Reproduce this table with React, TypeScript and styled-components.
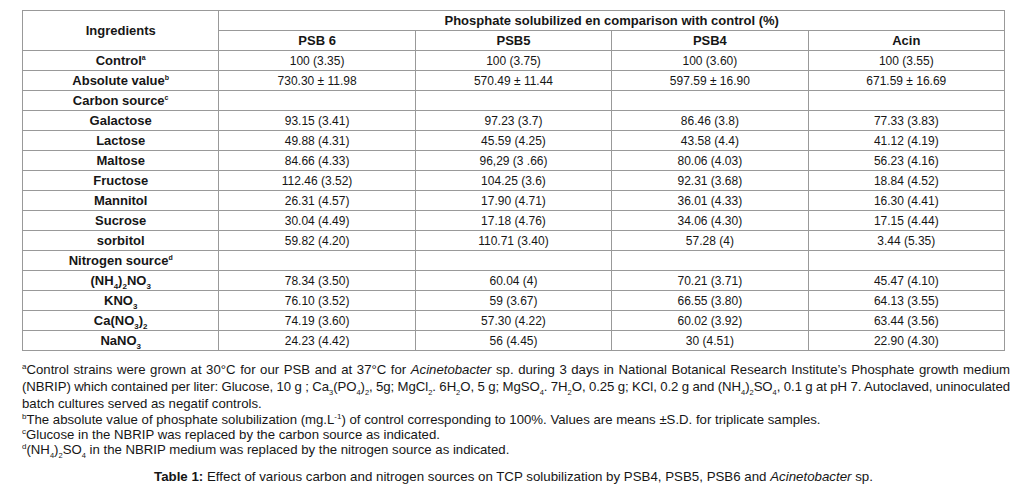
import React from "react";
import styled, { createGlobalStyle } from "styled-components";

const Global = createGlobalStyle`
  html, body { margin: 0; padding: 0; background: #fff; }
  body { font-family: "Liberation Sans", Arial, sans-serif; color: #161616; }
`;

const Page = styled.div`
  padding: 10px 12px 0 22px;
  width: 1022px;
  box-sizing: border-box;
`;

const Table = styled.table`
  width: 983px;
  border-collapse: collapse;
  table-layout: fixed;
  font-size: 12px;
`;

const Cell = styled.td<{ $bold?: boolean }>`
  border: 1px solid #999;
  height: 19px;
  padding: 0 4px;
  text-align: center;
  vertical-align: middle;
  line-height: 14px;
  font-size: ${(p) => (p.$bold ? "13px" : "12px")};
  font-weight: ${(p) => (p.$bold ? 700 : 400)};
`;

const Head = styled.th`
  border: 1px solid #999;
  height: 19px;
  padding: 0 4px;
  text-align: center;
  vertical-align: middle;
  line-height: 14px;
  font-size: 13px;
  font-weight: 700;
`;

const Sup = styled.sup`
  font-size: 7px;
  vertical-align: 5px;
  line-height: 0;
  font-weight: 700;
`;

const Sub = styled.sub`
  font-size: 8px;
  vertical-align: -4px;
  line-height: 0;
`;

const NSub = styled.sub`
  font-size: 7.5px;
  vertical-align: -4px;
  line-height: 0;
`;

const Notes = styled.div`
  margin-top: 10px;
  font-size: 13.2px;
  width: 988px;
`;

const NoteLine = styled.div<{ $lh?: number; $full?: boolean; $tight?: boolean }>`
  line-height: ${(p) => p.$lh ?? 15}px;
  text-align: ${(p) => (p.$full ? "justify" : "left")};
  text-align-last: ${(p) => (p.$full ? "justify" : "left")};
  white-space: ${(p) => (p.$full ? "nowrap" : "normal")};
  word-spacing: ${(p) => (p.$tight ? "-1.2px" : "normal")};
  letter-spacing: ${(p) => (p.$tight ? "-0.05px" : "normal")};
`;

const NoteSup = styled.sup`
  font-size: 8px;
  vertical-align: 5px;
  line-height: 0;
`;

const Caption = styled.div`
  margin-top: 12px;
  font-size: 13.3px;
  line-height: 16px;
  text-align: center;
  width: 983px;
`;

const B = styled.b`
  font-weight: 700;
`;

type Row = { label: React.ReactNode; values?: string[] };

const rows: Row[] = [
  { label: <>Control<Sup>a</Sup></>, values: ["100 (3.35)", "100 (3.75)", "100 (3.60)", "100 (3.55)"] },
  { label: <>Absolute value<Sup>b</Sup></>, values: ["730.30 ± 11.98", "570.49 ± 11.44", "597.59 ± 16.90", "671.59 ± 16.69"] },
  { label: <>Carbon source<Sup>c</Sup></> },
  { label: "Galactose", values: ["93.15 (3.41)", "97.23 (3.7)", "86.46 (3.8)", "77.33 (3.83)"] },
  { label: "Lactose", values: ["49.88 (4.31)", "45.59 (4.25)", "43.58 (4.4)", "41.12 (4.19)"] },
  { label: "Maltose", values: ["84.66 (4.33)", "96,29 (3 .66)", "80.06 (4.03)", "56.23 (4.16)"] },
  { label: "Fructose", values: ["112.46 (3.52)", "104.25 (3.6)", "92.31 (3.68)", "18.84 (4.52)"] },
  { label: "Mannitol", values: ["26.31 (4.57)", "17.90 (4.71)", "36.01 (4.33)", "16.30 (4.41)"] },
  { label: "Sucrose", values: ["30.04 (4.49)", "17.18 (4.76)", "34.06 (4.30)", "17.15 (4.44)"] },
  { label: "sorbitol", values: ["59.82 (4.20)", "110.71 (3.40)", "57.28 (4)", "3.44 (5.35)"] },
  { label: <>Nitrogen source<Sup>d</Sup></> },
  { label: <>(NH<Sub>4</Sub>)<Sub>2</Sub>NO<Sub>3</Sub></>, values: ["78.34 (3.50)", "60.04 (4)", "70.21 (3.71)", "45.47 (4.10)"] },
  { label: <>KNO<Sub>3</Sub></>, values: ["76.10 (3.52)", "59 (3.67)", "66.55 (3.80)", "64.13 (3.55)"] },
  { label: <>Ca(NO<Sub>3</Sub>)<Sub>2</Sub></>, values: ["74.19 (3.60)", "57.30 (4.22)", "60.02 (3.92)", "63.44 (3.56)"] },
  { label: <>NaNO<Sub>3</Sub></>, values: ["24.23 (4.42)", "56 (4.45)", "30 (4.51)", "22.90 (4.30)"] },
];

export default function App() {
  return (
    <>
      <Global />
      <Page>
        <Table>
          <thead>
            <tr>
              <Head rowSpan={2}>Ingredients</Head>
              <Head colSpan={4}>Phosphate solubilized en comparison with control (%)</Head>
            </tr>
            <tr>
              <Head>PSB 6</Head>
              <Head>PSB5</Head>
              <Head>PSB4</Head>
              <Head>Acin</Head>
            </tr>
          </thead>
          <tbody>
            {rows.map((r, i) => (
              <tr key={i}>
                <Cell $bold>{r.label}</Cell>
                {(r.values ?? ["", "", "", ""]).map((v, j) => (
                  <Cell key={j}>{v}</Cell>
                ))}
              </tr>
            ))}
          </tbody>
        </Table>
        <Notes>
          <NoteLine $lh={17} $full>
            <NoteSup>a</NoteSup>Control strains were grown at 30°C for our PSB and at 37°C for <i>Acinetobacter</i> sp. during 3 days in National Botanical Research Institute’s Phosphate growth medium
          </NoteLine>
          <NoteLine $lh={17.5} $full $tight>
            (NBRIP) which contained per liter: Glucose, 10 g ; Ca<NSub>3</NSub>(PO<NSub>4</NSub>)<NSub>2</NSub>, 5g; MgCl<NSub>2</NSub>. 6H<NSub>2</NSub>O, 5 g; MgSO<NSub>4</NSub>. 7H<NSub>2</NSub>O, 0.25 g; KCl, 0.2 g and (NH<NSub>4</NSub>)<NSub>2</NSub>SO<NSub>4</NSub>, 0.1 g at pH 7. Autoclaved, uninoculated
          </NoteLine>
          <NoteLine $lh={16.5}>batch cultures served as negatif controls.</NoteLine>
          <NoteLine $lh={15.5}>
            <NoteSup>b</NoteSup>The absolute value of phosphate solubilization (mg.L<NoteSup>-1</NoteSup>) of control corresponding to 100%. Values are means ±S.D. for triplicate samples.
          </NoteLine>
          <NoteLine $lh={14.5}>
            <NoteSup>c</NoteSup>Glucose in the NBRIP was replaced by the carbon source as indicated.
          </NoteLine>
          <NoteLine $lh={15}>
            <NoteSup>d</NoteSup>(NH<NSub>4</NSub>)<NSub>2</NSub>SO<NSub>4</NSub> in the NBRIP medium was replaced by the nitrogen source as indicated.
          </NoteLine>
        </Notes>
        <Caption>
          <B>Table 1:</B> Effect of various carbon and nitrogen sources on TCP solubilization by PSB4, PSB5, PSB6 and <i>Acinetobacter</i> sp.
        </Caption>
      </Page>
    </>
  );
}
